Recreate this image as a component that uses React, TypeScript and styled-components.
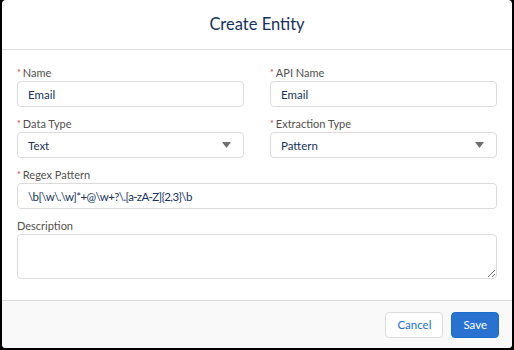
import React from "react";
import styled, { createGlobalStyle } from "styled-components";

const Global = createGlobalStyle`
  html, body { margin: 0; padding: 0; background: #000; }
  body { font-family: "Lato", "Noto Sans", sans-serif; }
  * { box-sizing: border-box; }
`;

const Backdrop = styled.div`
  width: 514px;
  height: 350px;
  padding: 0 2px 2px 2px;
  background: #000;
`;

const Modal = styled.div`
  width: 510px;
  height: 348px;
  background: #fff;
  border-radius: 4px;
  overflow: hidden;
  display: flex;
  flex-direction: column;
`;

const Header = styled.div`
  height: 50px;
  border-bottom: 1px solid #dddbda;
  display: flex;
  align-items: center;
  justify-content: center;
  padding-bottom: 1px;
`;

const Title = styled.h2`
  margin: 0;
  font-size: 16.5px;
  font-weight: 400;
  color: #16325c;
`;

const Body = styled.div`
  flex: 1;
  padding: 14px 15px 0 15px;
  display: flex;
  flex-direction: column;
  gap: 8px;
`;

const Row = styled.div`
  display: grid;
  grid-template-columns: 1fr 1fr;
  column-gap: 26px;
`;

const Field = styled.div`
  display: flex;
  flex-direction: column;
`;

const Label = styled.label`
  font-size: 11px;
  line-height: 16px;
  color: #514f4d;
  height: 17px;
  display: flex;
  align-items: center;
`;

const Star = styled.abbr`
  color: #c23934;
  text-decoration: none;
  margin-right: 2px;
  font-size: 9px;
`;

const Input = styled.input<{ $tight?: boolean }>`
  height: 26px;
  width: 100%;
  border: 1px solid #dddbda;
  border-radius: 4px;
  padding: 0 10px;
  font-family: inherit;
  font-size: 11.5px;
  letter-spacing: ${(p) => (p.$tight ? "-0.6px" : "0")};
  color: #16325c;
  background: #fff;
  outline: none;
`;

const SelectBox = styled.div`
  height: 26px;
  border: 1px solid #dddbda;
  border-radius: 4px;
  padding: 0 12px 0 10px;
  font-size: 11.5px;
  color: #16325c;
  display: flex;
  align-items: center;
  justify-content: space-between;
`;

const TextArea = styled.textarea`
  height: 45px;
  width: 100%;
  border: 1px solid #dddbda;
  border-radius: 4px;
  padding: 6px 10px;
  font-family: inherit;
  font-size: 11.5px;
  color: #16325c;
  outline: none;
  resize: vertical;
`;

const Footer = styled.div`
  height: 48px;
  border-top: 1px solid #dddbda;
  background: #f9f9f9;
  display: flex;
  align-items: center;
  justify-content: flex-end;
  gap: 8px;
  padding: 0 13px 0 0;
`;

const Button = styled.button<{ $primary?: boolean }>`
  height: 26px;
  padding: 0 11px;
  border-radius: 4px;
  font-family: inherit;
  font-size: 11.5px;
  border: 1px solid ${(p) => (p.$primary ? "#1b6dcc" : "#dddbda")};
  background: ${(p) => (p.$primary ? "#2a72d0" : "#fff")};
  color: ${(p) => (p.$primary ? "#fff" : "#1b6dcc")};
`;

const Arrow = () => (
  <svg width="9" height="6" viewBox="0 0 9 6">
    <path d="M0 0 H9 L4.5 6 Z" fill="#706e6b" />
  </svg>
);

const Select = ({ value }: { value: string }) => (
  <SelectBox>
    <span>{value}</span>
    <Arrow />
  </SelectBox>
);

export default function App() {
  return (
    <>
      <Global />
      <Backdrop>
        <Modal>
          <Header>
            <Title>Create Entity</Title>
          </Header>
          <Body>
            <Row>
              <Field>
                <Label><Star>*</Star>Name</Label>
                <Input readOnly value="Email" />
              </Field>
              <Field>
                <Label><Star>*</Star>API Name</Label>
                <Input readOnly value="Email" />
              </Field>
            </Row>
            <Row>
              <Field>
                <Label><Star>*</Star>Data Type</Label>
                <Select value="Text" />
              </Field>
              <Field>
                <Label><Star>*</Star>Extraction Type</Label>
                <Select value="Pattern" />
              </Field>
            </Row>
            <Field>
              <Label><Star>*</Star>Regex Pattern</Label>
              <Input $tight readOnly value={"\\b[\\w\\.\\w]*+@\\w+?\\.[a-zA-Z]{2,3}\\b"} />
            </Field>
            <Field>
              <Label>Description</Label>
              <TextArea readOnly value="" />
            </Field>
          </Body>
          <Footer>
            <Button>Cancel</Button>
            <Button $primary>Save</Button>
          </Footer>
        </Modal>
      </Backdrop>
    </>
  );
}
